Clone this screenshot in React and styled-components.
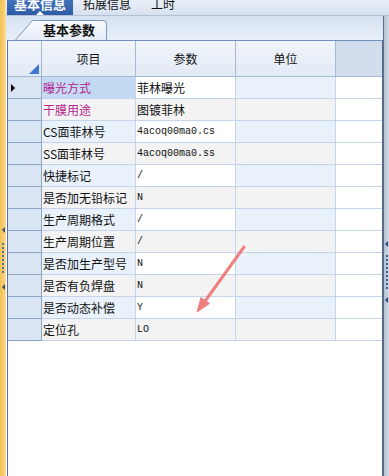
import React from 'react';
import styled, { createGlobalStyle } from 'styled-components';

const Global = createGlobalStyle`
  html, body { margin: 0; padding: 0; background: #fff; }
  body { font-family: "Noto Sans CJK SC", "Noto Sans", sans-serif; }
  #root { width: 389px; height: 476px; overflow: hidden; }
`;

const Frame = styled.div`
  position: relative;
  display: flex;
  width: 389px;
  height: 476px;
  overflow: hidden;
`;

const Splitter = styled.div`
  flex: none;
  width: 6px;
  box-sizing: border-box;
  display: flex;
  flex-direction: column;
  align-items: center;
  padding-top: ${p => p.$top}px;
  background: ${p => p.$side === 'left'
    ? 'linear-gradient(to right, #f2c257, #f7cf74 70%, #fbe2a6)'
    : 'linear-gradient(to right, #b3c0d3, #d3dbe6)'};
  border-left: ${p => (p.$side === 'right' ? '1px solid #5a6d8c' : 'none')};
`;

const GripArrow = styled.span`
  width: 0;
  height: 0;
  border-top: 3px solid transparent;
  border-bottom: 3px solid transparent;
  border-right: 3px solid ${p => p.$color};
  margin-top: ${p => p.$gap || 0}px;
`;

const GripDots = styled.span`
  width: 2px;
  height: ${p => p.$h}px;
  margin-top: ${p => p.$gap}px;
  background: repeating-linear-gradient(to bottom, ${p => p.$color} 0 2px, transparent 2px 4px);
`;

const Column = styled.div`
  flex: 1;
  display: flex;
  flex-direction: column;
  min-width: 0;
`;

const TopTabs = styled.div`
  flex: none;
  height: 16px;
  box-sizing: border-box;
  display: flex;
  align-items: flex-end;
  overflow: hidden;
  background: linear-gradient(#e9eff7, #d7e1ee);
  border-bottom: 1px solid #b2c1d5;
`;

const TopTab = styled.div`
  position: relative;
  flex: none;
  height: 22px;
  line-height: 22px;
  margin-left: ${p => (p.$active ? 1 : 0)}px;
  width: ${p => (p.$active ? '66px' : 'auto')};
  padding: ${p => (p.$active ? '0' : '0 10px')};
  text-align: center;
  font-size: ${p => (p.$active ? 13 : 12)}px;
  font-weight: ${p => (p.$active ? 700 : 400)};
  color: ${p => (p.$active ? '#fff' : '#111')};
  background: ${p => (p.$active ? 'linear-gradient(#4f7dc4, #2d5ba5)' : 'transparent')};
  &::after {
    content: '';
    display: ${p => (p.$active ? 'block' : 'none')};
    position: absolute;
    left: 29px;
    bottom: 0;
    border-left: 4px solid transparent;
    border-right: 4px solid transparent;
    border-bottom: 4px solid #fff;
  }
`;

const Body = styled.div`
  flex: 1;
  display: flex;
  min-height: 0;
`;

const Content = styled.div`
  flex: 1;
  display: flex;
  flex-direction: column;
  min-width: 0;
`;

const SubBar = styled.div`
  flex: none;
  height: 24px;
  display: flex;
  align-items: flex-end;
  background: linear-gradient(#d6e2f2, #e8eff9);
`;

const SubTab = styled.div`
  position: relative;
  margin-left: 9px;
  width: 92px;
  height: 20px;
  box-sizing: border-box;
  padding-left: 28px;
  line-height: 20px;
  font-size: 13px;
  font-weight: 700;
  color: #111;
`;

const TabShape = styled.svg`
  position: absolute;
  left: 0;
  top: 0;
  z-index: 0;
`;

const TabLabel = styled.span`
  position: relative;
  z-index: 1;
`;

const Grid = styled.div`
  flex: 1;
  margin-left: 1px;
  background: #fff;
  border-top: 1px solid #7090c2;
  border-left: 1px solid #5e7090;
  border-right: 1px solid #55688a;
`;

const Row = styled.div`
  display: grid;
  grid-template-columns: 34px 94px 100px 100px 46px;
  height: ${p => p.$h}px;
`;

const HeadCell = styled.div`
  position: relative;
  box-sizing: border-box;
  border-right: ${p => (p.$last ? 'none' : '1px solid #a6b9d3')};
  border-bottom: 1px solid #a6b9d3;
  background: ${p => (p.$last ? '#d2deed' : 'linear-gradient(#f1f5fb, #e2eaf5)')};
  display: flex;
  align-items: center;
  justify-content: center;
  font-size: 12px;
  color: #111;
`;

const CornerMark = styled.span`
  position: absolute;
  right: 2px;
  bottom: 2px;
  width: 0;
  height: 0;
  border-left: 10px solid transparent;
  border-bottom: 10px solid #3f78cf;
`;

const RowHead = styled.div`
  box-sizing: border-box;
  background: #dae5f4;
  border-right: 1px solid #8ea6c6;
  border-bottom: 1px solid #8ea6c6;
  display: flex;
  align-items: center;
  padding-left: 3px;
`;

const Pointer = styled.span`
  width: 0;
  height: 0;
  border-top: 4px solid transparent;
  border-bottom: 4px solid transparent;
  border-left: 4px solid #000;
`;

const Cell = styled.div`
  box-sizing: border-box;
  border-right: ${p => (p.$last ? 'none' : '1px solid #c4d4ea')};
  border-bottom: 1px solid #c4d4ea;
  background: ${p => p.$bg};
  padding-left: 1px;
  display: flex;
  align-items: center;
  white-space: nowrap;
  overflow: hidden;
  font-family: ${p => (p.$mono ? '"Liberation Mono", monospace' : '"Noto Sans CJK SC", "Noto Sans", sans-serif')};
  font-size: ${p => (p.$mono ? 10 : 12)}px;
  color: ${p => p.$color || '#111'};
`;

const ArrowOverlay = styled.svg`
  position: absolute;
  left: 0;
  top: 0;
  pointer-events: none;
`;

const rows = [
  ['曝光方式', '菲林曝光', true],
  ['干膜用途', '图镀菲林', true],
  ['CS面菲林号', '4acoq00ma0.cs'],
  ['SS面菲林号', '4acoq00ma0.ss'],
  ['快捷标记', '/'],
  ['是否加无铅标记', 'N'],
  ['生产周期格式', '/'],
  ['生产周期位置', '/'],
  ['是否加生产型号', 'N'],
  ['是否有负焊盘', 'N'],
  ['是否动态补偿', 'Y'],
  ['定位孔', 'LO'],
];

const isAscii = s => /^[\x00-\x7f]+$/.test(s);

export default function App() {
  return (
    <Frame>
      <Global />
      <Splitter $side="left" $top={227}>
        <GripArrow $color="#3b4e6e" />
        <GripDots $h={32} $gap={10} $color="#5a6f90" />
        <GripArrow $color="#3b4e6e" $gap={9} />
      </Splitter>
      <Column>
        <TopTabs>
          <TopTab $active>基本信息</TopTab>
          <TopTab>拓展信息</TopTab>
          <TopTab>工时</TopTab>
        </TopTabs>
        <Body>
          <Content>
            <SubBar>
              <SubTab>
                <TabShape width="92" height="20" viewBox="0 0 92 20">
                  <defs>
                    <linearGradient id="tabfill" x1="0" y1="0" x2="0" y2="1">
                      <stop offset="0" stopColor="#f8fafd" />
                      <stop offset="1" stopColor="#e5ecf7" />
                    </linearGradient>
                  </defs>
                  <path
                    d="M0 20.5 L17.5 0.5 L88 0.5 Q91.5 0.5 91.5 4 L91.5 20.5"
                    fill="url(#tabfill)"
                    stroke="#7d96b9"
                    strokeWidth="1"
                  />
                </TabShape>
                <TabLabel>基本参数</TabLabel>
              </SubTab>
            </SubBar>
            <Grid>
              <Row $h={36}>
                <HeadCell><CornerMark /></HeadCell>
                <HeadCell>项目</HeadCell>
                <HeadCell>参数</HeadCell>
                <HeadCell>单位</HeadCell>
                <HeadCell $last />
              </Row>
              {rows.map(([name, value, pink], i) => {
                const odd = i % 2 === 0;
                const itemBg = i === 0 ? '#c4d9f2' : odd ? '#e9f1fb' : '#f3f3f3';
                const valBg = odd ? '#ffffff' : '#f3f3f3';
                const unitBg = odd ? '#e9f1fb' : '#f3f3f3';
                return (
                  <Row $h={22} key={name}>
                    <RowHead>{i === 0 && <Pointer />}</RowHead>
                    <Cell $bg={itemBg} $color={pink ? '#b3258e' : '#111'}>{name}</Cell>
                    <Cell $bg={valBg} $mono={isAscii(value)}>{value}</Cell>
                    <Cell $bg={unitBg} />
                    <Cell $bg="#ffffff" $last />
                  </Row>
                );
              })}
            </Grid>
          </Content>
          <Splitter $side="right" $top={225}>
            <GripArrow $color="#2e4a7a" />
            <GripDots $h={34} $gap={8} $color="#3d5a8c" />
            <GripArrow $color="#2e4a7a" $gap={8} />
          </Splitter>
        </Body>
      </Column>
      <ArrowOverlay width="389" height="476" viewBox="0 0 389 476">
        <g opacity="0.9" fill="#f07474" stroke="#f07474">
          <line x1="244" y1="247" x2="203" y2="304" strokeWidth="3" strokeLinecap="round" />
          <polygon points="197,312 209.5,303.5 201,297.5" strokeWidth="1" strokeLinejoin="round" />
        </g>
      </ArrowOverlay>
    </Frame>
  );
}
